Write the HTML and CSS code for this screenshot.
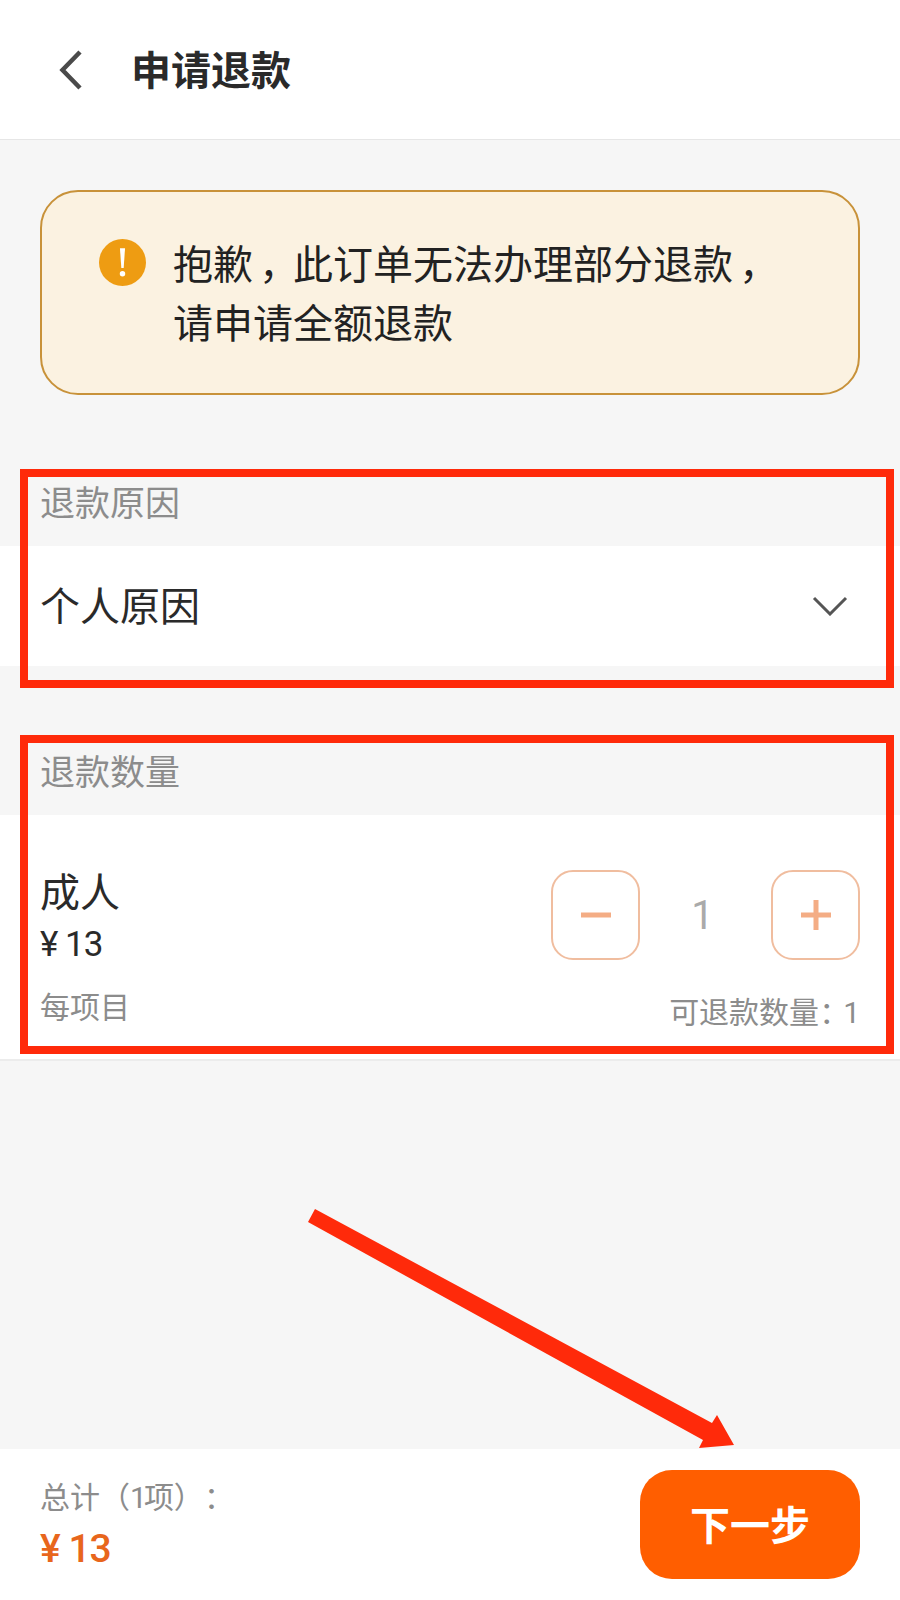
FILE: index.html
```html
<!DOCTYPE html>
<html lang="zh-CN">
<head>
	<meta charset="UTF-8">
	<title>申请退款</title>
	<link rel="stylesheet" href="styles.css">
</head>
<body>
	<div class="page">
		<header class="top_bar">
			<svg class="back_icon" viewBox="0 0 24 40"><path d="M21 2 L3.5 20 L21 38"/></svg>
			<h1 class="top_title">申请退款</h1>
		</header>

		<main class="main_box">
			<div class="notice">
				<svg class="notice_icon" viewBox="0 0 48 48">
					<circle cx="24" cy="24" r="24"/>
					<path d="M21.4 9.5 H26.6 L25.2 29.5 H22.8 Z"/>
					<circle cx="24" cy="35.5" r="2.8"/>
				</svg>
				<p class="notice_text">抱歉<span class="comma">，</span>此订单无法办理部分退款<span class="comma">，</span><br>请申请全额退款</p>
			</div>

			<section class="sec sec_reason">
				<div class="sec_label">退款原因</div>
				<div class="reason_row">
					<span class="reason_text">个人原因</span>
					<svg class="down_icon" viewBox="0 0 36 20"><path d="M2 2 L18 18 L34 2"/></svg>
				</div>
				<div class="red_mark"></div>
			</section>

			<section class="sec sec_qty">
				<div class="sec_label">退款数量</div>
				<div class="qty_row">
					<div class="qty_left">
						<div class="qty_name">成人</div>
						<div class="qty_price">¥ 13</div>
						<div class="qty_unit">每项目</div>
					</div>
					<div class="qty_right">
						<div class="stepper">
							<div class="step_btn"><svg viewBox="0 0 32 32"><path d="M1 16 H31"/></svg></div>
							<div class="step_num">1</div>
							<div class="step_btn"><svg viewBox="0 0 32 32"><path d="M1 16 H31 M16 1 V31"/></svg></div>
						</div>
						<div class="qty_max">可退款数量<span class="colon tight">：</span>1</div>
					</div>
				</div>
				<div class="red_mark"></div>
			</section>
		</main>

		<footer class="foot_bar">
			<div class="total">
				<div class="total_label">总计（<span class="one">1</span>项）<span class="colon">：</span></div>
				<div class="total_price">¥ 13</div>
			</div>
			<a class="next_btn" href="javascript:"><span class="next_text">下一步</span></a>
		</footer>

		<svg class="arrow" viewBox="0 0 900 1600">
			<polygon points="315,1209 712,1423 717,1415 734,1445 699,1448 703,1440 308,1222"/>
		</svg>
	</div>
</body>
</html>
```

FILE: styles.css
```css
/*reset*/
body,h1,p{margin: 0; padding: 0;}
body{font-family: "Noto Sans CJK SC", "Noto Sans", sans-serif; color: #222; text-spacing-trim: space-all;}
a{text-decoration: none;}

/*page*/
.page{position: relative; width: 900px; height: 1600px; display: flex; flex-direction: column; overflow: hidden; background-color: #f6f6f6;}

/*header*/
.top_bar{height: 139px; display: flex; align-items: center; padding-left: 59px; background-color: #fff; border-bottom: 1px solid #e6e6e6; flex-shrink: 0;}
.back_icon{width: 24px; height: 40px; fill: none; stroke: #4a4a4a; stroke-width: 4.5; margin-right: 48px;}
.top_title{font-size: 40px; font-weight: 700; line-height: 50px; color: #2a2a2a; margin-bottom: 4px;}

/*notice*/
.main_box{flex: 1;}
.notice{height: 205px; box-sizing: border-box; margin: 50px 40px 0 40px; padding: 41px 0 0 57px; display: flex; gap: 27px; background-color: #fbf2e1; border: 2px solid #c8923a; border-radius: 38px;}
.notice_icon{width: 47px; height: 47px; margin-top: 6px; flex-shrink: 0; fill: #fff;}
.notice_icon circle:first-child{fill: #ee9c12;}
.notice_text{font-size: 40px; line-height: 59px; color: #222; white-space: nowrap;}
.comma{padding-left: 6px; letter-spacing: -6px;}

/*sections*/
.sec{position: relative;}
.sec_reason{margin-top: 75px;}
.sec_qty{margin-top: 73px; border-bottom: 2px solid #ececec;}
.sec_label{height: 76px; padding-left: 40px; font-size: 35px; line-height: 62px; color: #8c8c8c;}
.reason_row{height: 120px; padding: 0 52px 0 40px; display: flex; align-items: center; justify-content: space-between; background-color: #fff; font-size: 40px; color: #2a2a2a;}
.reason_text{margin-bottom: 4px;}
.down_icon{width: 36px; height: 20px; fill: none; stroke: #555; stroke-width: 3;}

.qty_row{height: 244px; box-sizing: border-box; padding: 55px 40px 0 40px; display: flex; justify-content: space-between; background-color: #fff;}
.qty_name{font-size: 40px; line-height: 40px; color: #2a2a2a;}
.qty_price{margin-top: 15px; font-family: Roboto, "Noto Sans CJK SC", sans-serif; font-size: 35px; letter-spacing: -1px; line-height: 40px; color: #2a2a2a;}
.qty_unit{margin-top: 20px; font-size: 30px; line-height: 40px; color: #8c8c8c;}
.stepper{display: flex; align-items: center;}
.step_btn{width: 89px; height: 90px; box-sizing: border-box; display: flex; align-items: center; justify-content: center; border: 2.5px solid #f0bd9f; border-radius: 22px;}
.step_btn svg{width: 32px; height: 32px; fill: none; stroke: #f4ad85; stroke-width: 5;}
.step_num{width: 131px; box-sizing: border-box; padding-right: 6px; text-align: center; font-family: Roboto, "Noto Sans CJK SC", sans-serif; font-size: 40px; color: #aaa;}
.qty_max{margin-top: 30px; text-align: right; font-family: Roboto, "Noto Sans CJK SC", sans-serif; font-size: 30px; line-height: 40px; color: #8c8c8c;}
.colon{font-family: "Noto Sans CJK TC", sans-serif;}
.colon.tight{letter-spacing: -6px;}

/*annotations*/
.red_mark{position: absolute; left: 20px; width: 874px; box-sizing: border-box; border: 8px solid #ff2a0a; top: -1px; height: 219px;}
.sec_qty .red_mark{top: -4px; height: 319px;}
.arrow{position: absolute; left: 0; top: 0; width: 900px; height: 1600px; fill: #ff2a0a; pointer-events: none;}

/*footer*/
.foot_bar{height: 151px; box-sizing: border-box; padding: 21px 40px 0 40px; display: flex; justify-content: space-between; background-color: #fff; flex-shrink: 0;}
.total{padding-top: 10px;}
.total_label{font-family: Roboto, "Noto Sans CJK SC", sans-serif; font-size: 30px; line-height: 30px; color: #8c8c8c;}
.total_label .one{letter-spacing: -3px;}
.total_price{margin-top: 16px; font-family: Roboto, "Noto Sans CJK SC", sans-serif; font-size: 39px; font-weight: 500; letter-spacing: -1px; line-height: 40px; color: #e8661c;}
.next_btn{width: 220px; height: 109px; display: flex; align-items: center; justify-content: center; background-color: #ff5e00; border-radius: 32px; color: #fff; font-size: 40px; font-weight: 700;}
.next_text{margin-bottom: 4px;}
```
